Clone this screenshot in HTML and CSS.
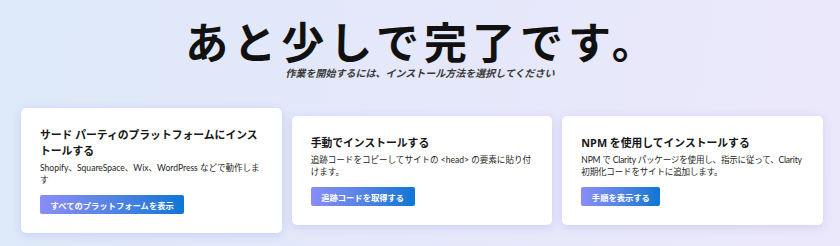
FILE: index.html
```html
<!DOCTYPE html>
<html lang="ja">
<head>
    <meta charset="UTF-8">
    <meta name="viewport" content="width=device-width, initial-scale=1.0">
    <title>インストール方法の選択</title>
    <link rel="stylesheet" href="styles.css">
</head>
<body>
    <header class="intro">
        <h1 class="title">あと少しで完了です。</h1>
        <p class="subtitle">作業を開始するには、インストール方法を選択してください</p>
    </header>

    <main class="options">
        <section class="card">
            <h2 class="card-title">サード パーティのプラットフォームにインストールする</h2>
            <p class="card-text">Shopify、SquareSpace、Wix、WordPress などで動作します</p>
            <button class="card-button" type="button">すべてのプラットフォームを表示</button>
        </section>

        <section class="card">
            <h2 class="card-title">手動でインストールする</h2>
            <p class="card-text">追跡コードをコピーしてサイトの &lt;head&gt; の要素に貼り付けます。</p>
            <button class="card-button" type="button">追跡コードを取得する</button>
        </section>

        <section class="card">
            <h2 class="card-title">NPM を使用してインストールする</h2>
            <p class="card-text card-text-tight">NPM で Clarity パッケージを使用し、指示に従って、Clarity 初期化コードをサイトに追加します。</p>
            <button class="card-button" type="button">手順を表示する</button>
        </section>
    </main>
</body>
</html>
```

FILE: styles.css
```css
body {
    margin: 0;
    height: 246px;
    overflow: hidden;
    background: linear-gradient(100deg, #dde9f8 0%, #e5e8fa 50%, #ece8fb 100%);
    font-family: "Open Sans", "Noto Sans CJK JP", sans-serif;
    color: #1c1c1c;
}
.intro {
    padding-top: 17px;
    text-align: center;
}
.title {
    margin: 0;
    padding-left: 5px;
    font-family: "Noto Sans CJK JP", sans-serif;
    font-size: 43px;
    font-weight: bold;
    line-height: 46px;
    letter-spacing: 5px;
    color: #111;
}
.subtitle {
    margin: 3px 0 0;
    font-family: "Noto Sans CJK JP", sans-serif;
    font-size: 10px;
    font-style: italic;
    font-weight: bold;
    line-height: 14px;
    color: #3a3a3a;
}
.options {
    display: grid;
    grid-template-columns: repeat(3, 1fr);
    align-items: center;
    gap: 10px;
    margin-top: 28px;
    padding: 0 17px 0 21px;
}
.card {
    display: flex;
    flex-direction: column;
    align-items: flex-start;
    padding: 19px;
    background: white;
    border-radius: 5px;
    box-shadow: 0 2px 10px rgba(130, 130, 235, 0.25);
}
.card-title {
    margin: 0;
    font-size: 10.8px;
    font-weight: bold;
    line-height: 15.5px;
    color: #161616;
}
.card-text {
    margin: 5px 0 0;
    font-family: Lato, "Noto Sans CJK JP", sans-serif;
    font-size: 8.55px;
    line-height: 11.5px;
    color: #1e1e1e;
}
.card-text-tight {
    letter-spacing: -0.2px;
}
.card-button {
    margin-top: 9px;
    height: 19px;
    padding: 0 10.5px;
    border: none;
    border-radius: 2px;
    background: linear-gradient(90deg, #8a8df6 0%, #5a84e6 45%, #1076d4 100%);
    color: white;
    font-family: "Noto Sans CJK JP", sans-serif;
    font-size: 8.3px;
    font-weight: bold;
    cursor: pointer;
}
```
